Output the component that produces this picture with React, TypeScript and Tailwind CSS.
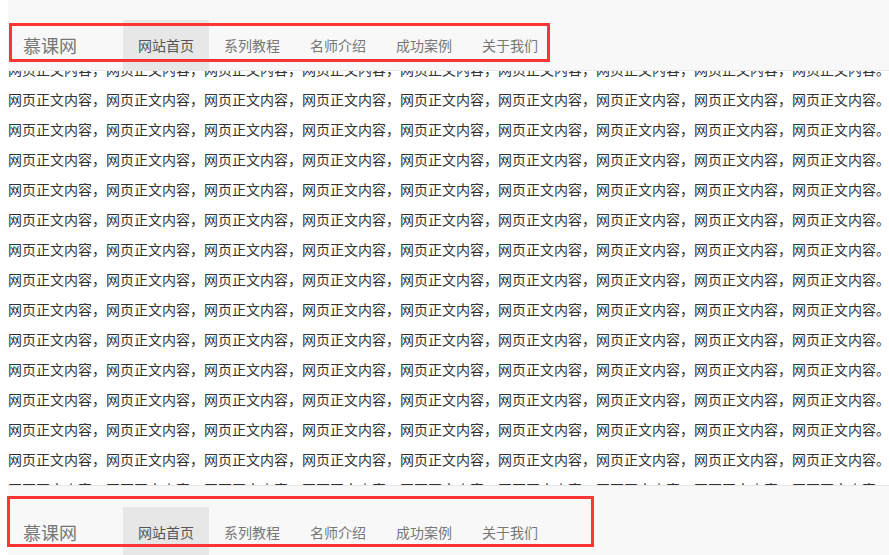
const navItems = ["网站首页", "系列教程", "名师介绍", "成功案例", "关于我们"];

const line = "网页正文内容，".repeat(8) + "网页正文内容。";

function NavRow() {
  return (
    <div className="flex h-[50px]">
      <a className="w-[115px] pl-[15px] text-[18px] leading-[50px] text-[#777]">慕课网</a>
      <ul className="flex">
        {navItems.map((item, index) => (
          <li
            key={item}
            className={
              index === 0
                ? "bg-[#e7e7e7] px-[15px] text-[14px] leading-[50px] text-[#555]"
                : "px-[15px] text-[14px] leading-[50px] text-[#777]"
            }
          >
            {item}
          </li>
        ))}
      </ul>
    </div>
  );
}

export default function App() {
  return (
    <div
      className="relative h-[555px] w-full overflow-hidden bg-white"
      style={{ fontFamily: '"Noto Sans CJK SC", "Noto Sans", sans-serif' }}
    >
      <main className="px-2 pt-[54px] text-[14px] leading-[30px] text-[#333]">
        {Array.from({ length: 18 }).map((_, index) => (
          <div key={index} className="whitespace-nowrap">
            {line}
          </div>
        ))}
      </main>

      {/* fixed navbars sit over the body text */}
      <nav className="absolute left-2 right-0 top-0 h-[71px] border-b border-[#e7e7e7] bg-[#f8f8f8] pt-5">
        <NavRow />
        <div className="pointer-events-none absolute left-px top-[23px] h-[39px] w-[541px] border-[3px] border-[#fc3535]" />
      </nav>

      <nav className="absolute bottom-0 left-2 right-0 h-[70px] border-t border-[#e7e7e7] bg-[#f8f8f8] pt-[21px]">
        <NavRow />
        <div className="pointer-events-none absolute -left-px top-[10px] h-[51px] w-[587px] border-[3px] border-[#fc3535]" />
      </nav>
    </div>
  );
}
